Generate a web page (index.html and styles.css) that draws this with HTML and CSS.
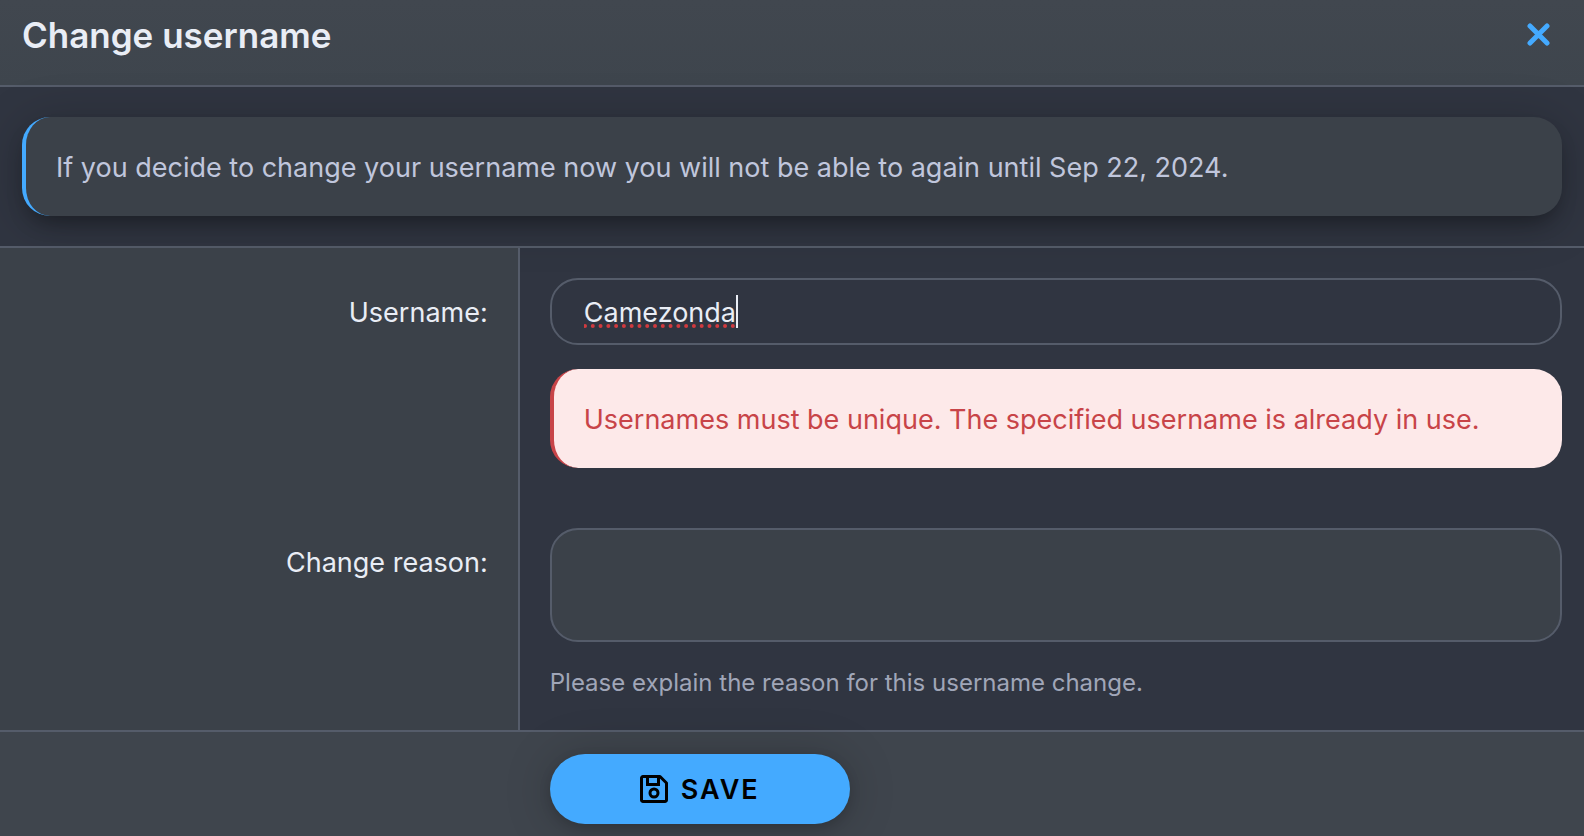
FILE: index.html
```html
<!DOCTYPE html>
<html lang="en">
<head>
    <meta charset="utf-8">
    <title>Change username</title>
    <link rel="stylesheet" href="styles.css">
</head>
<body>
    <form class="overlay">
        <header class="overlay-title">
            <h1>Change username</h1>
            <button type="button" class="close" aria-label="Close">
                <svg viewBox="0 0 24 24" width="24" height="24">
                    <path d="M3 4L20 21M20 4L3 21" fill="none" stroke="currentColor" stroke-width="5" stroke-linecap="round"/>
                </svg>
            </button>
        </header>

        <div class="info-row">
            <p class="notice">If you decide to change your username now you will not be able to again until Sep 22, 2024.</p>
        </div>

        <div class="form-row">
            <div class="row-label">
                <label for="username">Username:</label>
            </div>
            <div class="row-field">
                <div class="input-wrap">
                    <input type="text" class="input username" id="username" value="Camezonda" spellcheck="false">
                    <span class="caret"></span>
                </div>
                <p class="notice notice-error">Usernames must be unique. The specified username is already in use.</p>
            </div>
        </div>

        <div class="form-row">
            <div class="row-label">
                <label for="reason">Change reason:</label>
            </div>
            <div class="row-field">
                <textarea class="input reason" id="reason"></textarea>
                <p class="hint">Please explain the reason for this username change.</p>
            </div>
        </div>

        <footer class="submit-row">
            <div class="submit-controls">
                <button type="submit" class="save">
                    <svg viewBox="0 0 28 28" width="28" height="28" fill="none" stroke="currentColor" stroke-width="3" stroke-linejoin="round">
                        <path d="M3 1.5H20L26.500 8V25a1.500 1.500 0 0 1-1.500 1.500H3A1.500 1.500 0 0 1 1.500 25V3A1.500 1.500 0 0 1 3 1.500Z"/>
                        <path d="M7.500 2V9.500H18.500V2" stroke-linejoin="miter"/>
                        <circle cx="14" cy="18" r="4"/>
                    </svg>
                    Save
                </button>
            </div>
        </footer>
    </form>
</body>
</html>
```
FILE: styles.css
```css
* {
    box-sizing: border-box;
}
body {
    margin: 0;
    background-color: #303541;
    color: #e9edf5;
    font-family: Inter, 'Helvetica Neue', sans-serif;
    font-size: 27px;
    line-height: 39px;
}
h1, p {
    margin: 0;
}
.overlay {
    display: flex;
    flex-direction: column;
    min-height: 100vh;
}
.overlay-title {
    display: flex;
    justify-content: space-between;
    align-items: flex-start;
    padding: 10px 22px 25px;
    background: linear-gradient(#41474f, #3e454d);
    border-bottom: 2px solid #555c6a;
}
.overlay-title h1 {
    font-size: 35px;
    line-height: 50px;
    font-weight: 600;
}
.close {
    display: flex;
    padding: 12px 11px;
    background: none;
    border: none;
    color: #44aaff;
    cursor: pointer;
}
.info-row {
    padding: 30px 22px;
    border-bottom: 2px solid #555c6a;
}
.notice {
    padding: 31px 30px 29px;
    background-color: #3b4149;
    border-left: 4px solid #44aaff;
    border-radius: 28px;
    color: #c0c6dc;
    box-shadow: 0 12px 20px -6px rgba(0, 0, 0, 0.3), 0 6px 50px rgba(0, 0, 0, 0.22);
}
.notice-error {
    margin-top: 24px;
    background-color: #fde9e9;
    border-color: #c84448;
    color: #c84448;
    box-shadow: none;
}
.form-row {
    display: grid;
    grid-template-columns: minmax(0, 21fr) minmax(0, 43fr);
}
.row-label {
    padding: 45px 30px 30px;
    background-color: #3b4149;
    border-right: 2px solid #555c6a;
    text-align: right;
}
.row-field {
    padding: 30px 22px 30px 30px;
}
.input-wrap {
    position: relative;
}
.input {
    display: block;
    width: 100%;
    padding: 13px 32px 11px;
    border: 2px solid #555c6a;
    border-radius: 28px;
    background-color: #3b4149;
    color: inherit;
    font: inherit;
    outline: none;
}
.username {
    background-color: #303541;
    text-decoration: underline dotted #d03a3f 4px;
    text-decoration-skip-ink: none;
    text-underline-offset: 2px;
}
.caret {
    position: absolute;
    top: 17px;
    left: 186px;
    width: 2px;
    height: 33px;
    background-color: #e9edf5;
}
.reason {
    height: 114px;
    resize: none;
}
.hint {
    margin-top: 24px;
    color: #a0a6b8;
    font-size: 24px;
    line-height: 34px;
}
.submit-row {
    display: grid;
    grid-template-columns: minmax(0, 21fr) minmax(0, 43fr);
    flex-grow: 1;
    background-color: #3f454d;
    border-top: 2px solid #555c6a;
}
.submit-controls {
    grid-column: 2;
    padding: 22px 22px 12px 30px;
}
.save {
    display: flex;
    justify-content: center;
    align-items: center;
    gap: 13px;
    min-width: 300px;
    height: 70px;
    border: none;
    border-radius: 35px;
    background-color: #44aaff;
    color: #000;
    font: inherit;
    font-weight: 600;
    letter-spacing: 2px;
    text-transform: uppercase;
    box-shadow: 0 4px 12px rgba(0, 0, 0, 0.15), 0 2px 50px rgba(0, 0, 0, 0.2);
    cursor: pointer;
}
```
